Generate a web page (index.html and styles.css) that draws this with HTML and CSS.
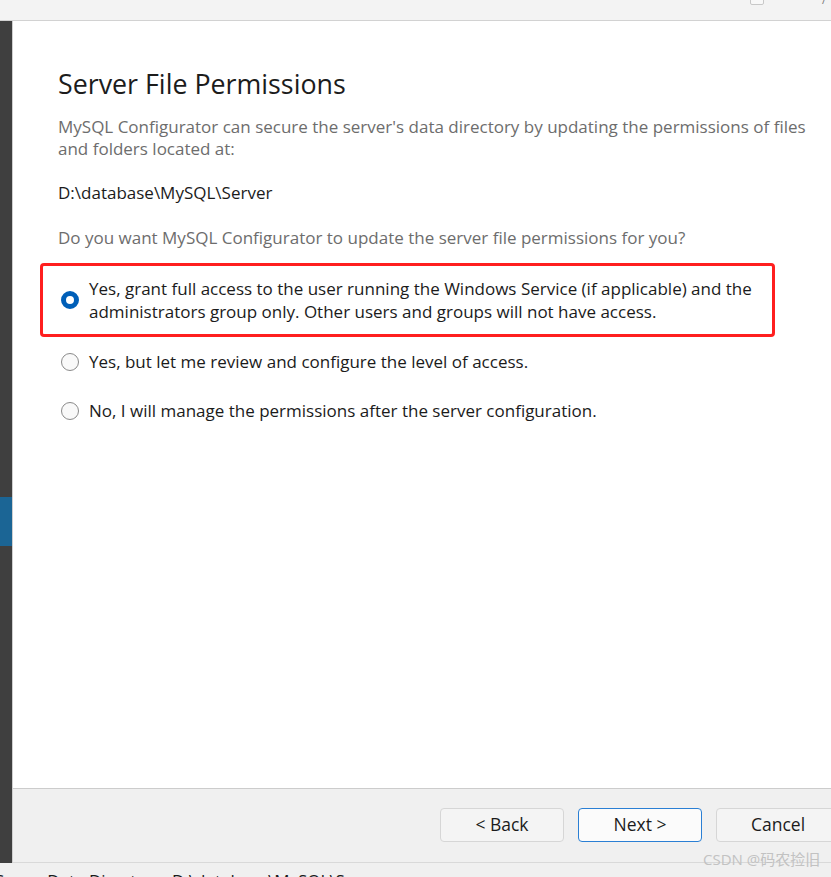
FILE: index.html
```html
<!DOCTYPE html>
<html>
<head>
<meta charset="utf-8">
<link rel="stylesheet" href="styles.css">
</head>
<body>
<div class="window">
  <div class="titlebar">
    <span class="tb-box"></span>
    <span class="tb-slash">/</span>
  </div>
  <div class="body">
    <div class="sidebar">
      <div class="side-active"></div>
    </div>
    <div class="main">
      <div class="content">
        <h1 class="title">Server File Permissions</h1>
        <p class="desc">MySQL Configurator can secure the server's data directory by updating the permissions of files and folders located at:</p>
        <p class="path">D:\database\MySQL\Server</p>
        <p class="desc question">Do you want MySQL Configurator to update the server file permissions for you?</p>
        <div class="options">
          <label class="option highlighted">
            <span class="radio checked"></span>
            <span class="opt-text">Yes, grant full access to the user running the Windows Service (if applicable) and the administrators group only. Other users and groups will not have access.</span>
          </label>
          <label class="option second">
            <span class="radio"></span>
            <span class="opt-text">Yes, but let me review and configure the level of access.</span>
          </label>
          <label class="option third">
            <span class="radio"></span>
            <span class="opt-text">No, I will manage the permissions after the server configuration.</span>
          </label>
        </div>
      </div>
      <div class="footer">
        <button class="btn">&lt; Back</button>
        <button class="btn primary">Next &gt;</button>
        <button class="btn">Cancel</button>
      </div>
    </div>
  </div>
  <div class="bottom">
    <span class="b-first">S</span>
    <span class="b-label">Data Directory</span>
    <span class="b-value">D:\database\MySQL\S</span>
  </div>
  <span class="watermark">CSDN @码农捡旧</span>
</div>
</body>
</html>
```
FILE: styles.css
```css
html, body {
  margin: 0;
  padding: 0;
  background: #ffffff;
}
body {
  width: 831px;
  height: 877px;
  overflow: hidden;
  font-family: "Open Sans", "Noto Sans", "Noto Sans CJK SC", sans-serif;
  color: #1b1b1b;
}
.window {
  position: relative;
  display: flex;
  flex-direction: column;
  height: 877px;
}
.titlebar {
  height: 20px;
  flex: none;
  background: #f3f3f3;
  border-bottom: 1px solid #d2d2d2;
  position: relative;
}
.tb-box {
  position: absolute;
  left: 750px;
  top: -6px;
  width: 12px;
  height: 9px;
  border: 1px solid #c8c8c8;
  border-radius: 2px;
  background: #f8f8f8;
}
.tb-slash {
  position: absolute;
  left: 822px;
  top: -6px;
  font-size: 11px;
  line-height: 12px;
  color: #777;
}
.body {
  display: flex;
  height: 842px;
  flex: none;
}
.sidebar {
  width: 12px;
  flex: none;
  background: #3f3f3f;
  border-right: 1px solid #cfcfcf;
  padding-top: 476px;
}
.side-active {
  height: 49px;
  background: #1b6595;
}
.main {
  flex: 1;
  display: flex;
  flex-direction: column;
}
.content {
  height: 767px;
  flex: none;
  background: #ffffff;
  padding-left: 45px;
  box-sizing: border-box;
  padding-top: 44px;
}
.title {
  margin: 0;
  font-weight: 400;
  font-size: 26.8px;
  line-height: 38px;
  color: #1c1c1c;
}
.desc {
  margin: 13px 0 0 0;
  font-size: 17px;
  line-height: 22px;
  color: #6d6d6d;
  width: 760px;
}
.path {
  margin: 22px 0 0 0;
  font-size: 17px;
  line-height: 22px;
  color: #1b1b1b;
}
.question {
  margin-top: 23px;
}
.options {
  margin-left: -18px;
  margin-top: 14px;
  display: flex;
  flex-direction: column;
}
.option {
  display: flex;
  align-items: center;
  font-size: 17px;
  line-height: 23px;
  color: #1b1b1b;
  padding-left: 21px;
}
.option.highlighted {
  width: 735px;
  height: 74px;
  box-sizing: border-box;
  border: 3px solid #ff1f1f;
  border-radius: 4px;
  padding-left: 18px;
  padding-right: 10px;
}
.option.second {
  margin-top: 13px;
}
.option.third {
  margin-top: 26px;
}
.radio {
  width: 18px;
  height: 18px;
  border: 1.5px solid #8a8a8a;
  border-radius: 50%;
  flex: none;
  margin-right: 10px;
  background: #f9f9f9;
  box-sizing: border-box;
}
.radio.checked {
  border: 5.5px solid #005fb8;
  background: #ffffff;
}
.footer {
  flex: 1;
  background: #f0f0f0;
  border-top: 1px solid #cccccc;
  border-bottom: 1px solid #d9d9d9;
  display: flex;
  align-items: flex-start;
  padding-top: 19px;
  padding-left: 427px;
  gap: 14px;
  box-sizing: border-box;
}
.btn {
  width: 124px;
  height: 34px;
  flex: none;
  font-family: "Open Sans", "Noto Sans", sans-serif;
  font-size: 17.5px;
  color: #1b1b1b;
  background: #f4f4f4;
  border: 1px solid #d6d6d6;
  border-radius: 4px;
  padding: 0 0 2px 0;
}
.btn.primary {
  border: 1.5px solid #2a7fd4;
  background: #fbfbfb;
}
.bottom {
  flex: 1;
  background: #f0f0f0;
  overflow: hidden;
  display: flex;
  align-items: flex-start;
  padding-top: 6px;
  font-size: 17px;
  line-height: 23px;
  color: #1b1b1b;
  white-space: nowrap;
}
.b-first {
  margin-left: -5px;
}
.b-label {
  margin-left: 43px;
}
.b-value {
  margin-left: 10px;
}
.watermark {
  position: absolute;
  left: 703px;
  top: 849px;
  font-size: 15px;
  line-height: 20px;
  color: #c2c2c2;
  white-space: nowrap;
}
```
